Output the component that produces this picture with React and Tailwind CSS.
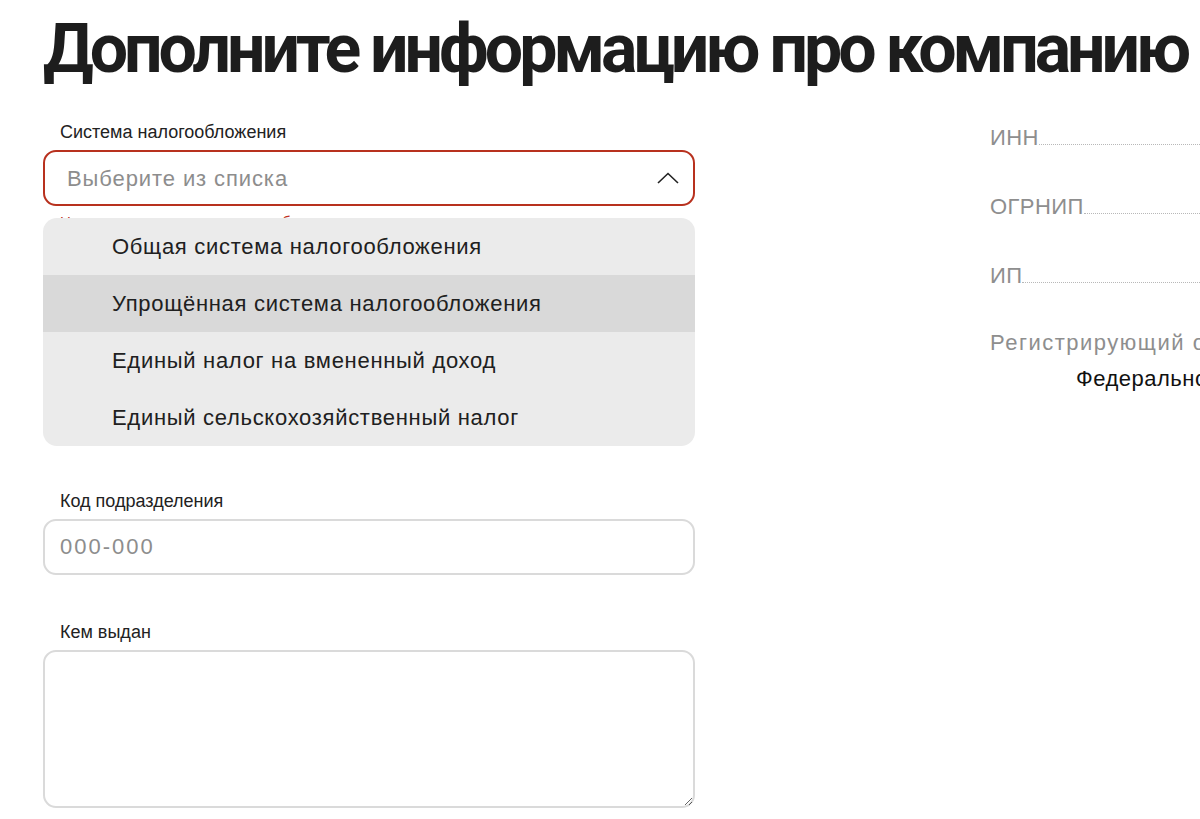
import React, { useState } from 'react';

const options = [
    'Общая система налогообложения',
    'Упрощённая система налогообложения',
    'Единый налог на вмененный доход',
    'Единый сельскохозяйственный налог',
];

const infoRows = ['ИНН', 'ОГРНИП', 'ИП'];

const ChevronUp = () => (
    <svg width="22" height="12" viewBox="0 0 22 12" fill="none">
        <path d="M1 11L11 1.5L21 11" stroke="#222" strokeWidth="1.6" />
    </svg>
);

const App = () => {
    const [hovered, setHovered] = useState(1);

    return (
        <div className="w-[1200px] h-[819px] overflow-hidden bg-white font-['Liberation_Sans',Arial,sans-serif] text-[#1f1f1f]">
            <h1 className="pl-[43px] pt-[9px] whitespace-nowrap font-['Roboto',sans-serif] font-bold text-[68px] leading-[80px] tracking-[-4px] text-[#1d1d1d]">
                Дополните информацию про компанию
            </h1>

            <div className="flex pl-[43px] pt-[33px]">
                {/* Left column: form */}
                <div className="w-[652px] shrink-0">
                    <label className="block pl-[17px] text-[18px] leading-[20px] text-[#222]">Система налогообложения</label>
                    <div className="relative mt-[8px]">
                        <button type="button" className="flex items-center justify-between w-full h-[56px] pl-[22px] pr-[14px] border-2 border-[#b8311e] rounded-[13px] bg-white">
                            <span className="text-[22px] tracking-[0.9px] text-[#8d8d8d]">Выберите из списка</span>
                            <ChevronUp />
                        </button>
                        <p className="pl-[17px] pt-[8px] text-[15px] leading-[16px] text-[#c0321e]">Нужно указать систему налогообложения</p>

                        <ul className="absolute left-0 right-0 top-[68px] bg-[#ebebeb] rounded-[14px] overflow-hidden">
                            {options.map((opt, i) => (
                                <li
                                    key={opt}
                                    onMouseEnter={() => setHovered(i)}
                                    className={`flex items-center h-[57px] pl-[69px] text-[22px] tracking-[0.7px] text-[#202020] cursor-pointer ${i === hovered ? 'bg-[#d9d9d9]' : ''}`}
                                >
                                    {opt}
                                </li>
                            ))}
                        </ul>
                    </div>

                    <div className="pt-[261px]">
                        <label className="block pl-[17px] text-[18px] leading-[20px] text-[#222]">Код подразделения</label>
                        <input
                            placeholder="000-000"
                            className="mt-[8px] w-full h-[56px] px-[15px] border-2 border-[#dadada] rounded-[13px] text-[22px] tracking-[2px] placeholder:text-[#8d8d8d] outline-none"
                        />
                    </div>

                    <div className="pt-[47px]">
                        <label className="block pl-[17px] text-[18px] leading-[20px] text-[#222]">Кем выдан</label>
                        <textarea className="block mt-[8px] w-full h-[158px] px-[15px] py-[12px] border-2 border-[#dadada] rounded-[13px] text-[22px] outline-none resize-y" />
                    </div>
                </div>

                {/* Right column: company info */}
                <div className="ml-[295px] w-[420px] shrink-0 pt-[3px]">
                    <div className="flex flex-col gap-[43px]">
                        {infoRows.map((row) => (
                            <div key={row} className="flex items-end h-[26px]">
                                <span className="text-[22px] leading-[26px] tracking-[0.4px] text-[#8e8e8e]">{row}</span>
                                <span className="flex-1 mb-[6px] border-b border-dotted border-[#b8b8b8]" />
                            </div>
                        ))}
                    </div>
                    <div className="pt-[41px] text-[22px] leading-[26px] tracking-[1.5px] text-[#8e8e8e] whitespace-nowrap">Регистрирующий орган</div>
                    <div className="pl-[86px] pt-[11px] text-[22px] leading-[24px] tracking-[0.5px] text-[#111] whitespace-nowrap">Федеральной налоговой службы</div>
                </div>
            </div>
        </div>
    );
};

export default App;
